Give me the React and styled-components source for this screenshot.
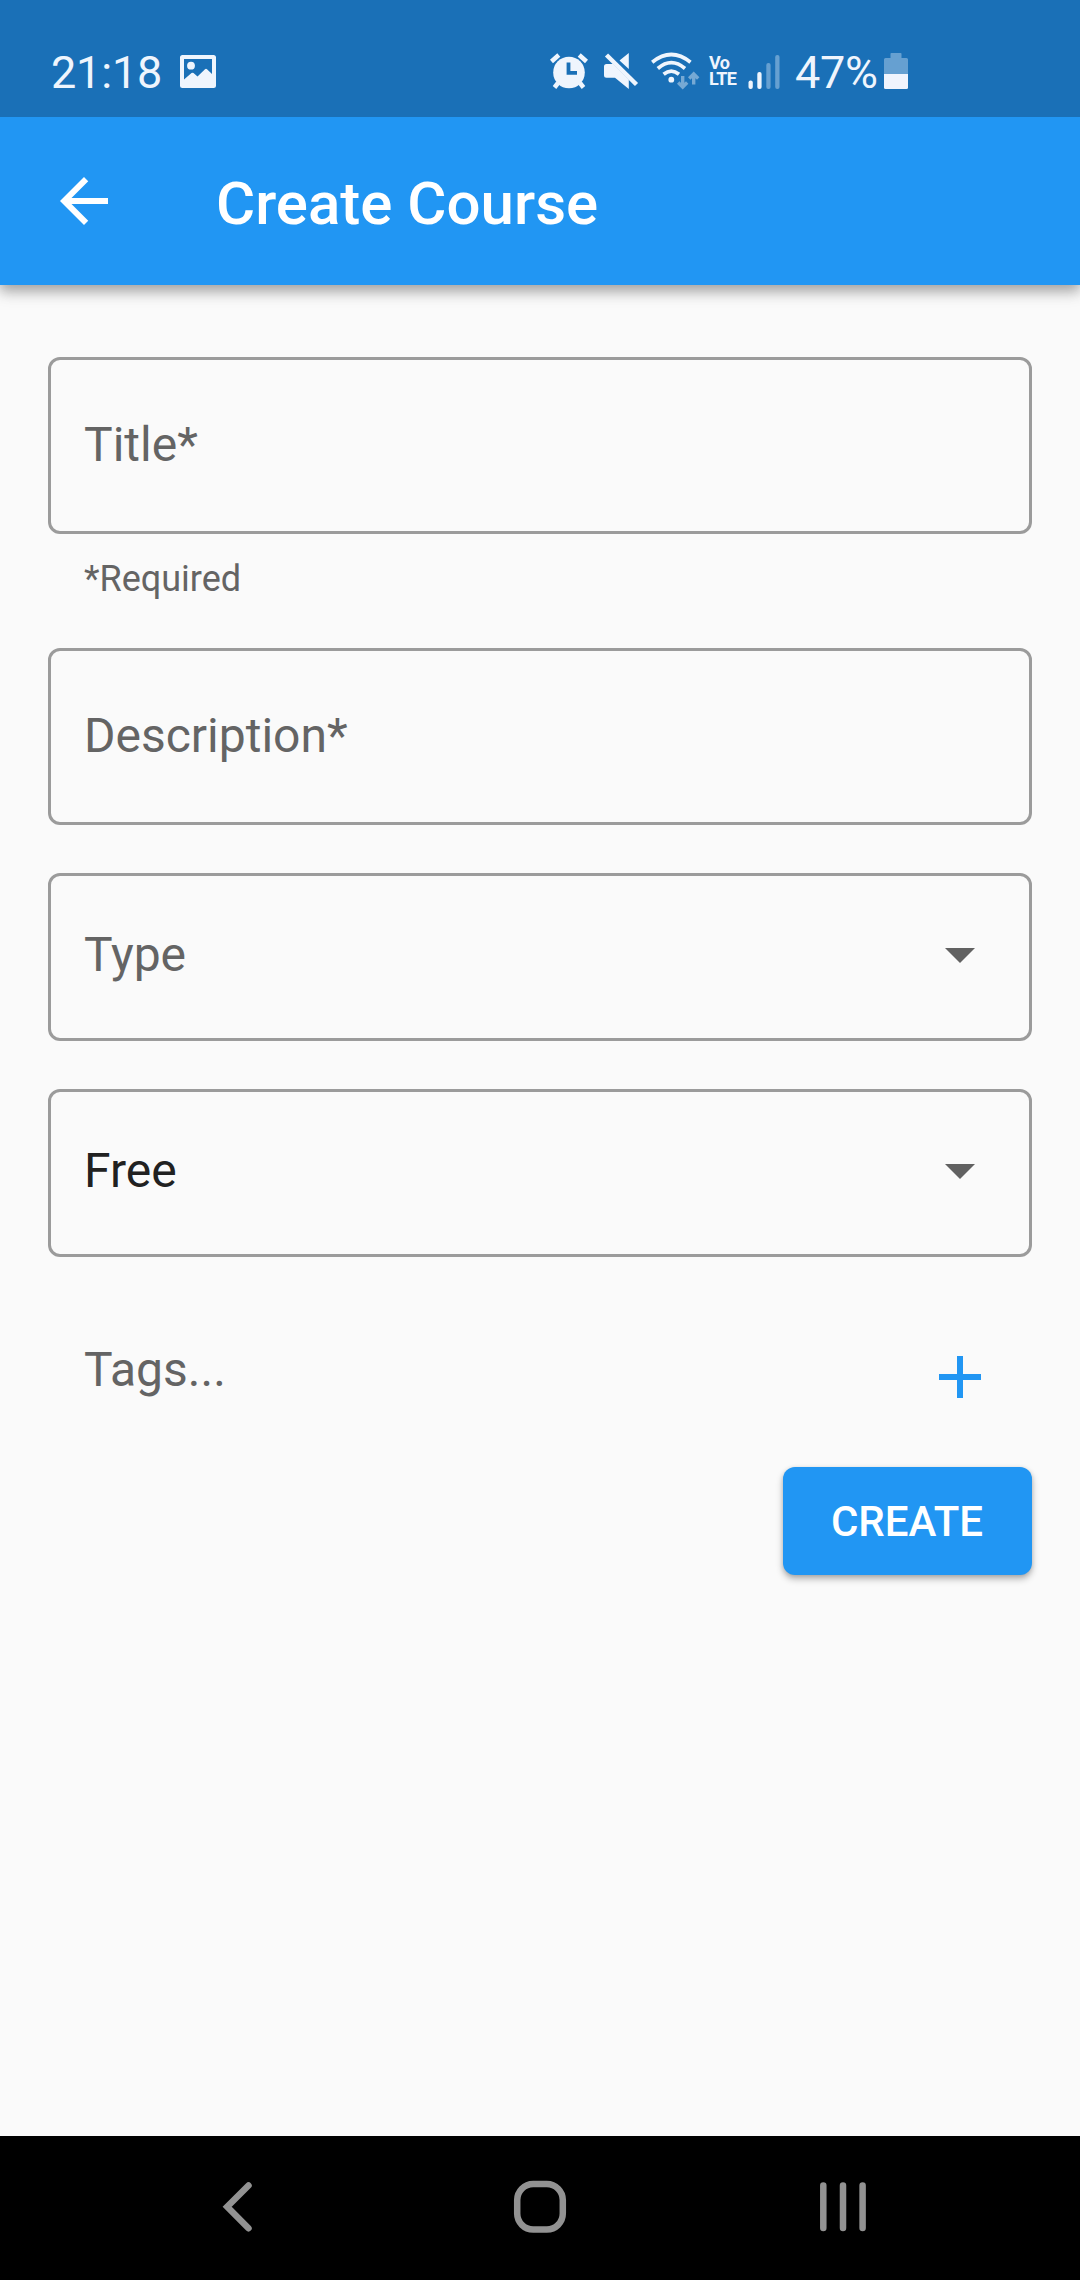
import React from "react";
import styled, { createGlobalStyle } from "styled-components";

const Global = createGlobalStyle`
  * { box-sizing: border-box; }
  html, body { margin: 0; padding: 0; background: #fafafa; }
  body { font-family: Roboto, "Liberation Sans", sans-serif; }
  button { font: inherit; border: 0; padding: 0; background: none; }
  svg { display: block; flex: none; }
`;

const Screen = styled.div`
  width: 1080px;
  height: 2280px;
  display: flex;
  flex-direction: column;
  background: #fafafa;
  overflow: hidden;
`;

const StatusBar = styled.header`
  position: relative;
  z-index: 1;
  height: 117px;
  flex: none;
  display: flex;
  justify-content: space-between;
  padding: 50px 172px 0 51px;
  background: #1a70b7;
  color: #eff5fd;
`;

const StatusGroup = styled.div`
  display: flex;
  align-items: center;
  height: 42px;
  gap: ${(p) => p.$gap || 0}px;
`;

const StatusText = styled.span`
  width: ${(p) => p.$width}px;
  font-size: 45px;
  line-height: 42px;
  padding-top: 3px;
  white-space: nowrap;
  letter-spacing: ${(p) => p.$spacing || 0}px;
`;

const Volte = styled.div`
  width: 29px;
  margin: 0 10px 0 9px;
  font-size: 18px;
  font-weight: 700;
  line-height: 16px;
  letter-spacing: -0.6px;
`;

const AppBar = styled.div`
  height: 168px;
  flex: none;
  display: flex;
  align-items: center;
  padding-left: 48px;
  gap: 96px;
  background: #2196f3;
  color: #fff;
  box-shadow: 0 6px 12px rgba(0, 0, 0, 0.28), 0 6px 18px rgba(0, 0, 0, 0.12);
`;

const Heading = styled.h1`
  margin: 0;
  padding-top: 6px;
  font-size: 60px;
  font-weight: 500;
  line-height: 72px;
`;

const Form = styled.main`
  flex: 1;
  display: flex;
  flex-direction: column;
  padding: 72px 48px 0;
`;

const Field = styled.div`
  height: ${(p) => p.$height}px;
  flex: none;
  display: flex;
  align-items: center;
  justify-content: space-between;
  padding: 0 33px ${(p) => p.$lift}px;
  margin-bottom: ${(p) => p.$after}px;
  border: 3px solid #9b9b9b;
  border-radius: 12px;
`;

const Label = styled.span`
  font-size: 48px;
  line-height: 56px;
  padding-top: ${(p) => p.$drop || 0}px;
  padding-bottom: ${(p) => p.$lift || 0}px;
  color: ${(p) => (p.$filled ? "#212121" : "#646464")};
`;

const Helper = styled.span`
  height: 90px;
  padding: 0 36px;
  font-size: 36px;
  line-height: 42px;
  color: #646464;
`;

const TagRow = styled.div`
  display: flex;
  justify-content: space-between;
  align-items: center;
  height: 144px;
  margin-top: 48px;
  padding: 0 36px;
`;

const CreateButton = styled.button`
  align-self: flex-end;
  width: 249px;
  height: 108px;
  margin-top: 18px;
  border-radius: 12px;
  background: #2196f3;
  color: #fff;
  box-shadow: 0 4px 7px rgba(0, 0, 0, 0.28), 0 1px 4px rgba(0, 0, 0, 0.12);

  && {
    padding: 2px 1px 0 0;
    font-size: 42px;
    font-weight: 500;
    line-height: 50px;
  }
`;

const NavBar = styled.nav`
  height: 144px;
  flex: none;
  display: flex;
  align-items: center;
  justify-content: space-between;
  padding: 0 210px 4px;
  background: #000;
`;

const Glyph = ({ d, fill = "currentColor" }) => (
  <svg width="72" height="72" viewBox="0 0 24 24" fill={fill}>
    <path d={d} />
  </svg>
);

const DropArrow = () => <Glyph d="M7 10l5 5 5-5z" fill="#616161" />;

const StatusIcon = ({ x, w, children }) => (
  <svg width={w} height="42" viewBox={`${x} 50 ${w} 42`} fill="#eff5fd">
    {children}
  </svg>
);

const PictureIcon = () => (
  <StatusIcon x={180} w={36}>
    <path
      fillRule="evenodd"
      d="M182.500 55H213.500Q216 55 216 57.500V85.500Q216 88 213.500 88H182.500Q180 88 180 85.500V57.500Q180 55 182.500 55ZM184 59V79.500L191.500 73Q192.500 72.300 193.500 73L197.500 76.500L205 69.200Q206 68.500 207 69.200L212 74V59Z"
    />
    <circle cx="191" cy="65.700" r="3.900" />
  </StatusIcon>
);

const AlarmIcon = () => (
  <StatusIcon x={549} w={40}>
    <g stroke="#eff5fd" strokeWidth="4.500">
      <path d="M551.500 61.500L558.800 55M586.500 61.500L579.200 55M558 83L554.500 87.500M580 83L583.500 87.500" />
    </g>
    <circle cx="569" cy="72.500" r="15.800" />
    <path d="M568.500 62.500V72.800H577" fill="none" stroke="#1a70b7" strokeWidth="3.800" />
  </StatusIcon>
);

const MuteIcon = () => (
  <StatusIcon x={603} w={36}>
    <path d="M606.500 64H613L628.800 79.500V89L615 77.800H606.500Q604 77.800 604 75.300V66.500Q604 64 606.500 64ZM628.800 53V69L619.500 60.500Z" />
    <path d="M606.500 55L636.500 84.500" fill="none" stroke="#eff5fd" strokeWidth="4.500" />
  </StatusIcon>
);

const WifiIcon = () => (
  <StatusIcon x={650} w={50}>
    <g fill="none" stroke="#eff5fd" strokeWidth="3.700">
      <path d="M652.200 62.200Q671.300 46.800 690.500 62.200M657.800 68.500Q671.300 56.700 685 68.500M663.600 74.300Q671.300 68 679 74.300" />
    </g>
    <circle cx="671.300" cy="79.700" r="2.900" />
    <g fill="none" stroke="#76a9d4" strokeWidth="3.400">
      <path d="M682.700 76V87M678.200 82.500L682.700 87L687.200 82.500M693.700 84.500V74M689.200 78.500L693.700 74L698.200 78.500" />
    </g>
  </StatusIcon>
);

const SignalIcon = () => (
  <StatusIcon x={748} w={32}>
    <rect x="748.500" y="80.500" width="4.300" height="8.500" rx="2" />
    <rect x="757.300" y="72" width="4.300" height="17" rx="2" />
    <rect x="766.300" y="63" width="4.300" height="26" rx="2" fill="#66a0d1" />
    <rect x="775.200" y="55" width="4.300" height="34" rx="2" fill="#66a0d1" />
  </StatusIcon>
);

const BatteryIcon = () => (
  <StatusIcon x={884} w={24}>
    <path
      d="M890.500 58V53.800Q890.500 53 891.300 53H900.700Q901.500 53 901.500 53.800V58H906.500Q908 58 908 59.500V74H884V59.500Q884 58 885.500 58Z"
      fill="#66a0d1"
    />
    <path d="M884 74H908V87.500Q908 89 906.500 89H885.500Q884 89 884 87.500Z" fill="#f0f4fd" />
  </StatusIcon>
);

const NavIcon = ({ children }) => (
  <svg width="60" height="60" viewBox="0 0 60 60" fill="none" stroke="#929292" strokeWidth="6.500" strokeLinecap="round">
    {children}
  </svg>
);

export default function App() {
  return (
    <>
      <Global />
      <Screen>
        <StatusBar>
          <StatusGroup $gap={16}>
            <StatusText $width={113} $spacing={-0.2}>21:18</StatusText>
            <PictureIcon />
          </StatusGroup>
          <StatusGroup>
            <StatusGroup $gap={11}>
              <StatusGroup $gap={14}>
                <AlarmIcon />
                <MuteIcon />
              </StatusGroup>
              <WifiIcon />
            </StatusGroup>
            <Volte>
              Vo
              <br />
              LTE
            </Volte>
            <StatusGroup $gap={15}>
              <SignalIcon />
              <StatusText $width={89} $spacing={-0.3}>47%</StatusText>
            </StatusGroup>
            <BatteryIcon />
          </StatusGroup>
        </StatusBar>
        <AppBar>
          <Glyph d="M20 11H7.830l5.590-5.590L12 4l-8 8 8 8 1.410-1.410L7.830 13H20v-2z" />
          <Heading>Create Course</Heading>
        </AppBar>
        <Form>
          <Field $height={177} $after={24} $lift={2}>
            <Label>Title*</Label>
          </Field>
          <Helper>*Required</Helper>
          <Field $height={177} $after={48} $lift={2}>
            <Label>Description*</Label>
          </Field>
          <Field $height={168} $after={48} $lift={6}>
            <Label $drop={2}>Type</Label>
            <DropArrow />
          </Field>
          <Field $height={168} $after={0} $lift={6}>
            <Label $drop={2} $filled>Free</Label>
            <DropArrow />
          </Field>
          <TagRow>
            <Label $lift={14}>Tags...</Label>
            <Glyph d="M19 13h-6v6h-2v-6H5v-2h6V5h2v6h6v2z" fill="#2196f3" />
          </TagRow>
          <CreateButton>CREATE</CreateButton>
        </Form>
        <NavBar>
          <NavIcon>
            <path d="M38.500 9.500L17.200 30.800L38.500 52.200" />
          </NavIcon>
          <NavIcon>
            <rect x="7.200" y="8" width="45.600" height="45.600" rx="16" />
          </NavIcon>
          <NavIcon>
            <path d="M13.300 9.500V52M33 9.500V52M52.600 9.500V52" />
          </NavIcon>
        </NavBar>
      </Screen>
    </>
  );
}
